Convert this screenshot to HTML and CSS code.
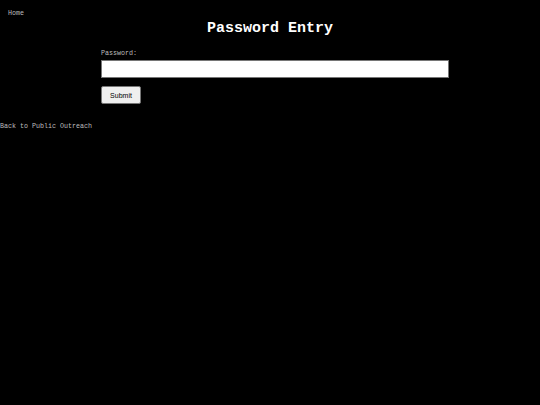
FILE: index.html
```html
<!DOCTYPE html>
<html>
<head>
<meta charset="utf-8">
<link rel="stylesheet" href="styles.css">
</head>
<body>
<nav class="nav"><a class="link" href="#">Home</a></nav>
<h1 class="title">Password Entry</h1>
<form class="form">
  <label class="label" for="pw">Password:</label>
  <input class="input" id="pw" type="password">
  <button class="btn" type="button">Submit</button>
</form>
<a class="link back" href="#">Back to Public Outreach</a>
</body>
</html>
```
FILE: styles.css
```css
html, body {
  margin: 0;
  padding: 0;
  background: #000;
  color: #bdbdbd;
  font-family: Courier, "Courier New", monospace;
  font-size: 6.67px;
}
.nav {
  padding: 9px 8px 0;
  height: 7px;
}
.link {
  color: #bdbdbd;
  text-decoration: none;
  display: inline-block;
  line-height: 7px;
}
.title {
  margin: 5px 0 0;
  text-align: center;
  color: #fff;
  font-size: 15px;
  font-weight: bold;
  line-height: 16px;
}
.form {
  margin: 13px 0 0 101px;
  width: 348px;
  display: flex;
  flex-direction: column;
  align-items: flex-start;
}
.label {
  line-height: 7px;
}
.input {
  box-sizing: border-box;
  width: 348px;
  height: 18px;
  margin: 3px 0 0;
  border: 1px solid #767676;
  background: #fff;
  padding: 0 3px;
}
.btn {
  box-sizing: border-box;
  margin-top: 8px;
  width: 40px;
  height: 18px;
  font-family: "Liberation Sans", Arial, sans-serif;
  font-size: 7px;
  font-weight: normal;
  color: #000;
  background: #efefef;
  border: 1px solid #767676;
  border-radius: 2px;
  padding: 0;
}
.back {
  margin-top: 19px;
  display: block;
}
```
